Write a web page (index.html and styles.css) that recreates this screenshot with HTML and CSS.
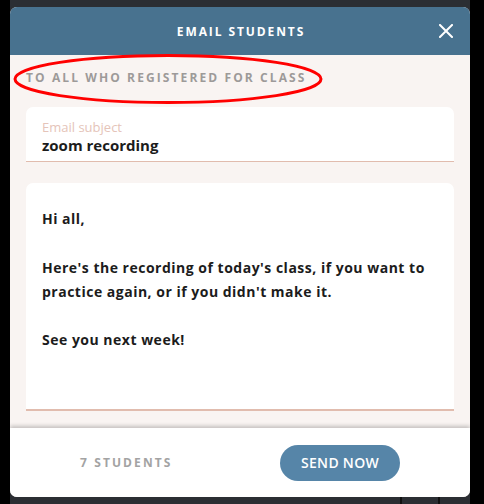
FILE: index.html
```html
<!DOCTYPE html>
<html>
<head>
<meta charset="utf-8">
<link rel="stylesheet" href="styles.css">
</head>
<body>
<div class="backdrop">
  <div class="modal">
    <header class="modal-header">
      <h1 class="title">EMAIL STUDENTS</h1>
      <button class="close" aria-label="Close">
        <svg width="14" height="14" viewBox="0 0 14 14"><path d="M1 1 L13 13 M13 1 L1 13" stroke="#fff" stroke-width="2" stroke-linecap="square"/></svg>
      </button>
    </header>
    <section class="modal-body">
      <div class="recipients">TO ALL WHO REGISTERED FOR CLASS</div>
      <div class="field subject">
        <div class="field-label">Email subject</div>
        <div class="field-value">zoom recording</div>
      </div>
      <div class="field message">
        <p>Hi all,</p>
        <p>Here's the recording of today's class, if you want to practice again, or if you didn't make it.</p>
        <p>See you next week!</p>
      </div>
    </section>
    <footer class="modal-footer">
      <span class="count">7 STUDENTS</span>
      <button class="send">SEND NOW</button>
    </footer>
  </div>
  <div class="behind-btn"></div>
  <svg class="annotation" width="330" height="60" viewBox="0 0 330 60"><ellipse cx="155" cy="26" rx="153" ry="23.5" fill="none" stroke="#f00" stroke-width="3"/></svg>
</div>
</body>
</html>
```

FILE: styles.css
```css
html, body {
  margin: 0;
  padding: 0;
  background: #000;
  width: 484px;
  height: 504px;
  overflow: hidden;
  font-family: "Open Sans", "Noto Sans", sans-serif;
}
.backdrop {
  position: relative;
  margin-left: 10px;
  width: 460px;
  height: 504px;
  padding-top: 7px;
  box-sizing: border-box;
  background: #2b2e33;
}
.modal {
  width: 460px;
  border-radius: 7px;
  overflow: hidden;
  background: #f9f4f2;
  position: relative;
  z-index: 1;
}
.modal-header {
  height: 48px;
  background: #48728f;
  display: flex;
  align-items: center;
  justify-content: center;
  position: relative;
}
.title {
  margin: 0;
  color: #fff;
  font-size: 12px;
  font-weight: 700;
  letter-spacing: 1.9px;
  padding-left: 2px;
}
.close {
  position: absolute;
  right: 17px;
  top: 17px;
  width: 14px;
  height: 14px;
  padding: 0;
  border: 0;
  background: none;
  display: flex;
}
.modal-body {
  padding: 16px 16px 17px;
  display: flex;
  flex-direction: column;
}
.recipients {
  color: #9d9a99;
  font-size: 12px;
  font-weight: 700;
  letter-spacing: 2.1px;
  line-height: 14px;
  margin-bottom: 22px;
}
.field {
  background: #fff;
  border-radius: 7px 7px 0 0;
  padding: 0 16px;
}
.subject {
  border-bottom: 1px solid #e1bcae;
  padding-top: 12px;
  height: 42px;
}
.field-label {
  color: #e5c4b9;
  font-size: 13px;
  line-height: 16px;
}
.field-value {
  color: #1c1c1c;
  font-size: 15px;
  font-weight: 700;
  line-height: 20px;
}
.message {
  margin-top: 21px;
  height: 202px;
  padding-top: 24px;
  border-bottom: 2px solid #e1bcae;
  font-size: 14px;
  font-weight: 700;
  letter-spacing: 0.5px;
  color: #1c1c1c;
  line-height: 24.3px;
}
.message p {
  margin: 0 0 24.3px;
}
.modal-footer {
  height: 69px;
  background: #fff;
  box-shadow: 0 -2px 4px rgba(0,0,0,0.22);
  display: flex;
  align-items: center;
  justify-content: space-between;
  padding: 0 70px;
  position: relative;
}
.count {
  color: #a3a3a3;
  font-size: 12px;
  font-weight: 700;
  letter-spacing: 2.1px;
}
.send {
  width: 120px;
  height: 36px;
  border: 0;
  border-radius: 18px;
  background: #5685a8;
  color: #fff;
  font-family: "Open Sans", "Noto Sans", sans-serif;
  font-size: 14px;
  font-weight: 600;
  letter-spacing: 0.3px;
}
.behind-btn {
  position: absolute;
  left: 390px;
  top: 488px;
  width: 36px;
  height: 30px;
  border: 2px solid #111;
  border-radius: 5px;
}
.annotation {
  position: absolute;
  left: 3px;
  top: 53px;
  z-index: 2;
}
```
